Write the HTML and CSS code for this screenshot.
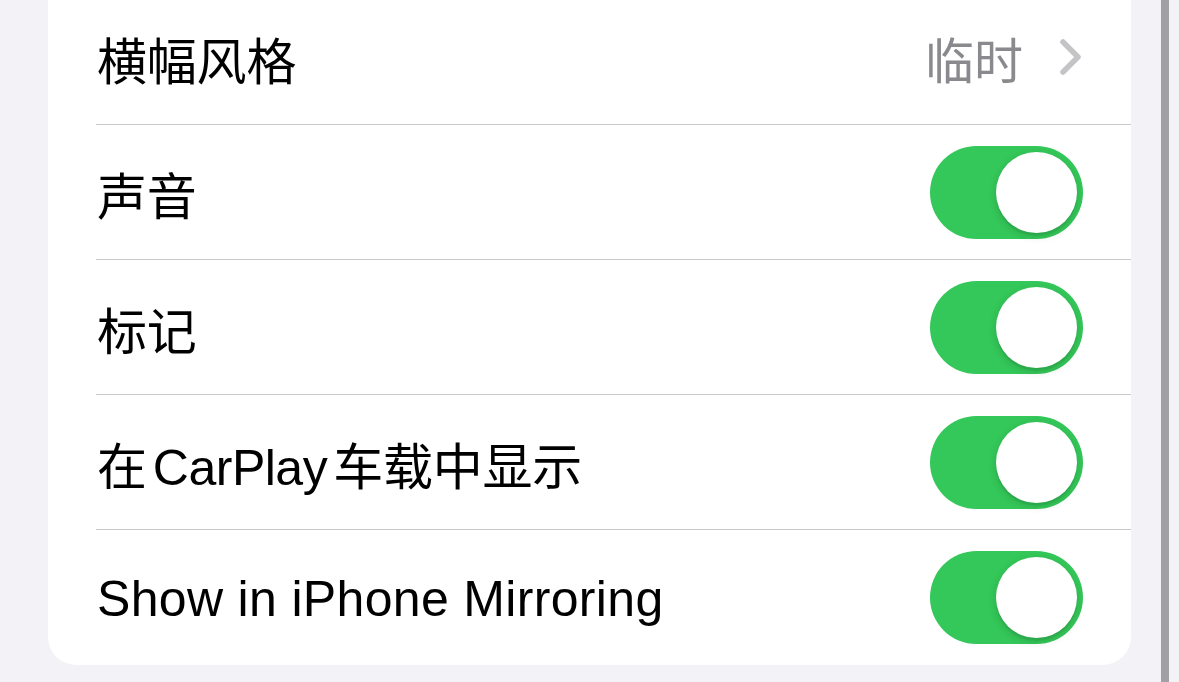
FILE: index.html
```html
<!DOCTYPE html>
<html lang="zh">
<head>
<meta charset="utf-8">
<link rel="stylesheet" href="styles.css">
</head>
<body>
<div class="page">
  <div class="card">
    <div class="row">
      <div class="row-inner">
        <span class="label">横幅风格</span>
        <span class="value">临时<svg class="chevron" width="24" height="36" viewBox="0 0 24 36"><polyline points="4,3 19,18 4,33" fill="none" stroke="#c4c4c7" stroke-width="5.5" stroke-linecap="round" stroke-linejoin="round"/></svg></span>
      </div>
    </div>
    <div class="row">
      <div class="row-inner">
        <span class="label">声音</span>
        <span class="toggle"><span class="knob"></span></span>
      </div>
    </div>
    <div class="row">
      <div class="row-inner">
        <span class="label">标记</span>
        <span class="toggle"><span class="knob"></span></span>
      </div>
    </div>
    <div class="row">
      <div class="row-inner">
        <span class="label">在<span class="latin">CarPlay</span>车载中显示</span>
        <span class="toggle"><span class="knob"></span></span>
      </div>
    </div>
    <div class="row last">
      <div class="row-inner">
        <span class="label wide">Show in iPhone Mirroring</span>
        <span class="toggle"><span class="knob"></span></span>
      </div>
    </div>
  </div>
  <div class="scrollbar"></div>
</div>
</body>
</html>
```

FILE: styles.css
```css
html, body {
  margin: 0;
  padding: 0;
  height: 100%;
  overflow: hidden;
  background: #f2f2f7;
}

.page {
  display: flex;
  align-items: flex-start;
  height: 682px;
  font-family: "Liberation Sans", "Noto Sans CJK SC", sans-serif;
}

.card {
  margin-left: 48px;
  margin-top: -10px;
  width: 1083px;
  background: #ffffff;
  border-radius: 0 0 28px 28px;
  display: flex;
  flex-direction: column;
}

.row {
  padding-left: 48px;
  height: 135px;
  display: flex;
}

.row-inner {
  flex: 1;
  display: flex;
  align-items: center;
  justify-content: space-between;
  padding-right: 48px;
  border-bottom: 1.5px solid #c8c8cb;
  box-sizing: border-box;
}

.row.last .row-inner {
  border-bottom: none;
}

.label {
  font-size: 50px;
  color: #000000;
  letter-spacing: -0.2px;
  margin-left: 1px;
  margin-top: 2px;
}

.label.wide {
  letter-spacing: 0.33px;
}

.latin {
  margin: 0 6px;
  letter-spacing: -0.5px;
}

.value {
  display: flex;
  align-items: center;
  font-size: 49px;
  color: #8a8a8e;
}

.chevron {
  margin-left: 36px;
  margin-right: 0;
}

.toggle {
  width: 153px;
  height: 93px;
  border-radius: 47px;
  background: #34c759;
  display: flex;
  align-items: center;
  justify-content: flex-end;
  padding-right: 6px;
  box-sizing: border-box;
}

.knob {
  width: 81px;
  height: 81px;
  border-radius: 50%;
  background: #ffffff;
  box-shadow: 0 3px 8px rgba(0, 0, 0, 0.15), 0 3px 1px rgba(0, 0, 0, 0.06);
}

.scrollbar {
  margin-left: 30px;
  width: 8px;
  height: 682px;
  background: #a0a0a5;
}
```
